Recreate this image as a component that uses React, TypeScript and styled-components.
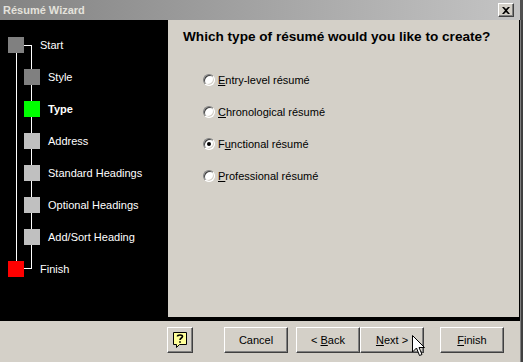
import React from "react";
import styled, { createGlobalStyle } from "styled-components";

const steps = [
  { label: "Start", level: 0, color: "#808080" },
  { label: "Style", level: 1, color: "#808080" },
  { label: "Type", level: 1, color: "#00ff00", current: true },
  { label: "Address", level: 1, color: "#c0c0c0" },
  { label: "Standard Headings", level: 1, color: "#c0c0c0" },
  { label: "Optional Headings", level: 1, color: "#c0c0c0" },
  { label: "Add/Sort Heading", level: 1, color: "#c0c0c0" },
  { label: "Finish", level: 0, color: "#ff0000" },
];

const options = [
  { key: "E", rest: "ntry-level résumé", pre: "" },
  { key: "C", rest: "hronological résumé", pre: "" },
  { key: "u", rest: "nctional résumé", pre: "F" },
  { key: "P", rest: "rofessional résumé", pre: "" },
];

const App = () => {
  const selected = 2;

  return (
    <>
      <GlobalStyle />
      <Window>
        <TitleBar>
          <Title>Résumé Wizard</Title>
          <CloseButton>
            <svg width="8" height="7" viewBox="0 0 8 7">
              <path d="M0 0h2l2 2 2-2h2L5 3.5 8 7H6L4 5 2 7H0l3-3.5z" fill="#000" />
            </svg>
          </CloseButton>
        </TitleBar>
        <Frame>
          <Main>
            <Body>
              <Sidebar>
                <Connector width="168" height="260">
                  <path
                    d="M16.5 33V241M31.5 25V249M24 25.5H32M24 248.5H32"
                    stroke="#fff"
                    strokeWidth="1"
                    fill="none"
                  />
                </Connector>
                {steps.map((s) => (
                  <Step key={s.label} $level={s.level}>
                    <StepBox $color={s.color} />
                    <StepLabel $level={s.level} $current={!!s.current}>
                      {s.label}
                    </StepLabel>
                  </Step>
                ))}
              </Sidebar>
              <Content>
                <Heading>Which type of résumé would you like to create?</Heading>
                <OptionList>
                  {options.map((o, i) => (
                    <Option key={o.rest}>
                      <Radio $checked={i === selected} />
                      <span>
                        {o.pre}
                        <u>{o.key}</u>
                        {o.rest}
                      </span>
                    </Option>
                  ))}
                </OptionList>
              </Content>
            </Body>
            <Footer>
              <HelpButton>
                <svg width="14" height="16" viewBox="0 0 14 16">
                  <path
                    d="M0.5 0.5H13.5V12.5H6.5L3.5 15.5V12.5H0.5Z"
                    fill="#ffff99"
                    stroke="#000"
                  />
                  <path
                    d="M4.5 4.5C4.5 2.5 9.5 2.5 9.5 4.5C9.5 6 7 6 7 8"
                    stroke="#000"
                    strokeWidth="1.6"
                    fill="none"
                  />
                  <rect x="6.2" y="9.2" width="1.6" height="1.6" fill="#000" />
                </svg>
              </HelpButton>
              <Button $gap={31}>Cancel</Button>
              <Button $gap={8}>
                {"< "}
                <u>B</u>ack
              </Button>
              <Button>
                <u>N</u>ext{" >"}
              </Button>
              <Button $gap={16}>
                <u>F</u>inish
              </Button>
              <Cursor width="13" height="22" viewBox="0 0 13 22">
                <path
                  d="M0.5 0.5V17L4.5 13L7.5 20.5L10 19.5L7 12.5H12.5Z"
                  fill="#fff"
                  stroke="#000"
                />
              </Cursor>
            </Footer>
          </Main>
          <Edge />
        </Frame>
      </Window>
    </>
  );
};

export default App;

const GlobalStyle = createGlobalStyle`
  html, body {
    margin: 0;
    padding: 0;
    background: #d4d0c8;
  }
  body {
    font-family: "Liberation Sans", Arial, sans-serif;
    font-size: 11px;
  }
`;
const Window = styled.div`
  width: 523px;
  height: 362px;
  display: flex;
  flex-direction: column;
  background: #d4d0c8;
  overflow: hidden;
`;
const TitleBar = styled.div`
  height: 20px;
  display: flex;
  align-items: center;
  justify-content: space-between;
  padding: 0 6px 0 3px;
  background: linear-gradient(to right, #838383, #c4c4c4);
  border-right: 3px solid #505050;
`;
const Title = styled.span`
  color: #e4e2dc;
  font-weight: bold;
  font-size: 11px;
`;
const CloseButton = styled.div`
  width: 16px;
  height: 14px;
  display: flex;
  align-items: center;
  justify-content: center;
  background: #d4d0c8;
  box-sizing: border-box;
  border: 1px solid;
  border-color: #fff #404040 #404040 #fff;
  box-shadow: inset -1px -1px #808080;
`;
const Frame = styled.div`
  flex: 1;
  display: flex;
`;
const Main = styled.div`
  flex: 1;
  display: flex;
  flex-direction: column;
`;
const Edge = styled.div`
  width: 3px;
  background: linear-gradient(to right, #808080 0 1px, #404040 1px);
`;
const Body = styled.div`
  height: 301px;
  display: flex;
  background: #000;
  padding-bottom: 4px;
  box-sizing: border-box;
`;
const Sidebar = styled.div`
  position: relative;
  width: 168px;
  padding-top: 9px;
  box-sizing: border-box;
`;
const Connector = styled.svg`
  position: absolute;
  left: 0;
  top: 0;
`;
const Step = styled.div<{ $level: number }>`
  position: relative;
  height: 32px;
  display: flex;
  align-items: center;
  padding-left: ${(p) => (p.$level ? 24 : 8)}px;
`;
const StepBox = styled.div<{ $color: string }>`
  width: 16px;
  height: 16px;
  background: ${(p) => p.$color};
`;
const StepLabel = styled.span<{ $level: number; $current: boolean }>`
  margin-left: ${(p) => (p.$level ? 8 : 16)}px;
  color: #fff;
  font-weight: ${(p) => (p.$current ? "bold" : "normal")};
`;
const Content = styled.div`
  flex: 1;
  background: #d4d0c8;
  padding: 9px 0 0 15px;
  margin-right: 1px;
`;
const Heading = styled.div`
  font-size: 13.6px;
  line-height: 16px;
  font-weight: bold;
  color: #000;
`;
const OptionList = styled.div`
  margin-top: 19px;
  padding-left: 20px;
  display: flex;
  flex-direction: column;
`;
const Option = styled.label`
  height: 32px;
  display: flex;
  align-items: center;
  gap: 3px;
  color: #000;
`;
const Radio = styled.span<{ $checked: boolean }>`
  position: relative;
  width: 12px;
  height: 12px;
  box-sizing: border-box;
  border-radius: 50%;
  background: #fff;
  border: 1px solid;
  border-color: #808080 #fff #fff #808080;
  box-shadow: inset 1px 1px #404040, inset -1px -1px #d4d0c8;

  &::after {
    content: "";
    display: ${(p) => (p.$checked ? "block" : "none")};
    position: absolute;
    left: 3px;
    top: 3px;
    width: 4px;
    height: 4px;
    border-radius: 50%;
    background: #000;
  }
`;
const Footer = styled.div`
  position: relative;
  flex: 1;
  display: flex;
  align-items: flex-start;
  padding: 6px 0 0 167px;
`;
const bevel = `
  box-sizing: border-box;
  background: #d4d0c8;
  border: 1px solid;
  border-color: #fff #404040 #404040 #fff;
  box-shadow: inset -1px -1px #808080;
`;
const HelpButton = styled.div`
  ${bevel}
  width: 26px;
  height: 26px;
  display: flex;
  align-items: center;
  justify-content: center;
`;
const Button = styled.div<{ $gap?: number }>`
  ${bevel}
  width: 64px;
  height: 26px;
  margin-left: ${(p) => p.$gap ?? 0}px;
  display: flex;
  align-items: center;
  justify-content: center;
  color: #000;
  font-size: 11px;
  white-space: pre;
`;
const Cursor = styled.svg`
  position: absolute;
  left: 412px;
  top: 14px;
`;
